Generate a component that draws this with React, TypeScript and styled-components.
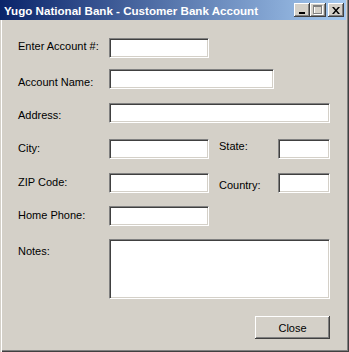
import { createGlobalStyle, styled } from 'styled-components';

const GlobalStyle = createGlobalStyle`
	html, body {
		margin: 0;
		padding: 0;
		background: #d4d0c8;
	}
	body {
		font-family: 'Liberation Sans', Arial, sans-serif;
		font-size: 11px;
		color: #000;
	}
`;

const Window = styled.div`
	display: flex;
	flex-direction: column;
	width: 349px;
	height: 352px;
	box-sizing: border-box;
	background: #d4d0c8;
	box-shadow:
		inset 1px 0 0 #d4d0c8,
		inset 2px 0 0 #ffffff,
		inset -1px -1px 0 #404040,
		inset -2px -2px 0 #808080;
`;

const TitleBar = styled.div`
	display: flex;
	align-items: center;
	height: 20px;
	margin-right: 3px;
	padding-left: 4px;
	background: linear-gradient(to right, #0a246a, #a6caf0);
`;

const Title = styled.span`
	flex: 1;
	color: #fff;
	font-weight: bold;
	font-size: 11.6px;
	white-space: nowrap;
	padding-top: 1px;
`;

const TitleButtons = styled.div`
	display: flex;
	align-items: center;
	margin-right: 2px;
`;

const TitleButton = styled.div<{ $gap?: number }>`
	display: flex;
	align-items: center;
	justify-content: center;
	width: 16px;
	height: 14px;
	box-sizing: border-box;
	margin-left: ${(p) => p.$gap ?? 0}px;
	background: #d4d0c8;
	box-shadow:
		inset -1px -1px 0 #404040,
		inset 1px 1px 0 #ffffff,
		inset -2px -2px 0 #808080;
`;

const FormBody = styled.div`
	display: flex;
	flex-direction: column;
	padding: 18px 19px 0 18px;
`;

const FormRow = styled.div<{ $top: number }>`
	display: grid;
	grid-template-columns: 91px 1fr;
	margin-top: ${(p) => p.$top}px;
	align-items: start;
`;

const FieldLabel = styled.label<{ $drop: number }>`
	line-height: 13px;
	padding-top: ${(p) => p.$drop}px;
	white-space: nowrap;
`;

const FieldPair = styled.div`
	display: flex;
	align-items: flex-start;
`;

const SideLabel = styled(FieldLabel)`
	width: 59px;
	margin-left: 10px;
`;

const TextBox = styled.input<{ $w: number }>`
	appearance: none;
	display: block;
	width: ${(p) => p.$w}px;
	height: 20px;
	margin: 0;
	padding: 0 3px;
	box-sizing: border-box;
	background: #fff;
	font: inherit;
	border-style: solid;
	border-width: 1px;
	border-color: #808080 #ffffff #ffffff #808080;
	box-shadow:
		inset 1px 1px 0 #404040,
		inset -1px -1px 0 #d4d0c8;
	outline: none;
`;

const NotesBox = styled.textarea`
	appearance: none;
	display: block;
	width: 221px;
	height: 60px;
	margin: 0;
	padding: 2px 3px;
	box-sizing: border-box;
	resize: none;
	background: #fff;
	font: inherit;
	border-style: solid;
	border-width: 1px;
	border-color: #808080 #ffffff #ffffff #808080;
	box-shadow:
		inset 1px 1px 0 #404040,
		inset -1px -1px 0 #d4d0c8;
	outline: none;
`;

const ButtonRow = styled.div`
	display: flex;
	justify-content: flex-end;
	margin-top: 17px;
`;

const PushButton = styled.button`
	width: 75px;
	height: 23px;
	padding: 0;
	border: none;
	background: #d4d0c8;
	font: inherit;
	font-size: 11px;
	color: #000;
	box-shadow:
		inset -1px -1px 0 #404040,
		inset 1px 1px 0 #ffffff,
		inset -2px -2px 0 #808080;
`;

export default function App() {
	return (
		<>
			<GlobalStyle />
			<Window>
				<TitleBar>
					<Title>Yugo National Bank - Customer Bank Account</Title>
					<TitleButtons>
						<TitleButton>
							<svg width="8" height="7" viewBox="0 0 8 7">
								<rect x="1" y="5" width="6" height="2" fill="#000" />
							</svg>
						</TitleButton>
						<TitleButton>
							<svg width="10" height="10" viewBox="0 0 10 10">
								<rect x="1.5" y="1.5" width="8" height="8" fill="none" stroke="#fff" />
								<rect x="0.5" y="0.5" width="8" height="8" fill="none" stroke="#808080" />
								<rect x="1" y="1" width="7" height="1" fill="#808080" />
							</svg>
						</TitleButton>
						<TitleButton $gap={2}>
							<svg width="8" height="7" viewBox="0 0 8 7">
								<path d="M0 0h2l2 2.5L6 0h2L5 3.5 8 7H6L4 4.5 2 7H0l3-3.5z" fill="#000" />
							</svg>
						</TitleButton>
					</TitleButtons>
				</TitleBar>
				<FormBody>
					<FormRow $top={0}>
						<FieldLabel $drop={2}>Enter Account #:</FieldLabel>
						<TextBox $w={100} />
					</FormRow>
					<FormRow $top={11}>
						<FieldLabel $drop={7}>Account Name:</FieldLabel>
						<TextBox $w={165} />
					</FormRow>
					<FormRow $top={14}>
						<FieldLabel $drop={6}>Address:</FieldLabel>
						<TextBox $w={221} />
					</FormRow>
					<FormRow $top={16}>
						<FieldLabel $drop={3}>City:</FieldLabel>
						<FieldPair>
							<TextBox $w={100} />
							<SideLabel $drop={1}>State:</SideLabel>
							<TextBox $w={52} />
						</FieldPair>
					</FormRow>
					<FormRow $top={14}>
						<FieldLabel $drop={3}>ZIP Code:</FieldLabel>
						<FieldPair>
							<TextBox $w={100} />
							<SideLabel $drop={6}>Country:</SideLabel>
							<TextBox $w={52} />
						</FieldPair>
					</FormRow>
					<FormRow $top={13}>
						<FieldLabel $drop={3}>Home Phone:</FieldLabel>
						<TextBox $w={100} />
					</FormRow>
					<FormRow $top={13}>
						<FieldLabel $drop={6}>Notes:</FieldLabel>
						<NotesBox />
					</FormRow>
					<ButtonRow>
						<PushButton>Close</PushButton>
					</ButtonRow>
				</FormBody>
			</Window>
		</>
	);
}
